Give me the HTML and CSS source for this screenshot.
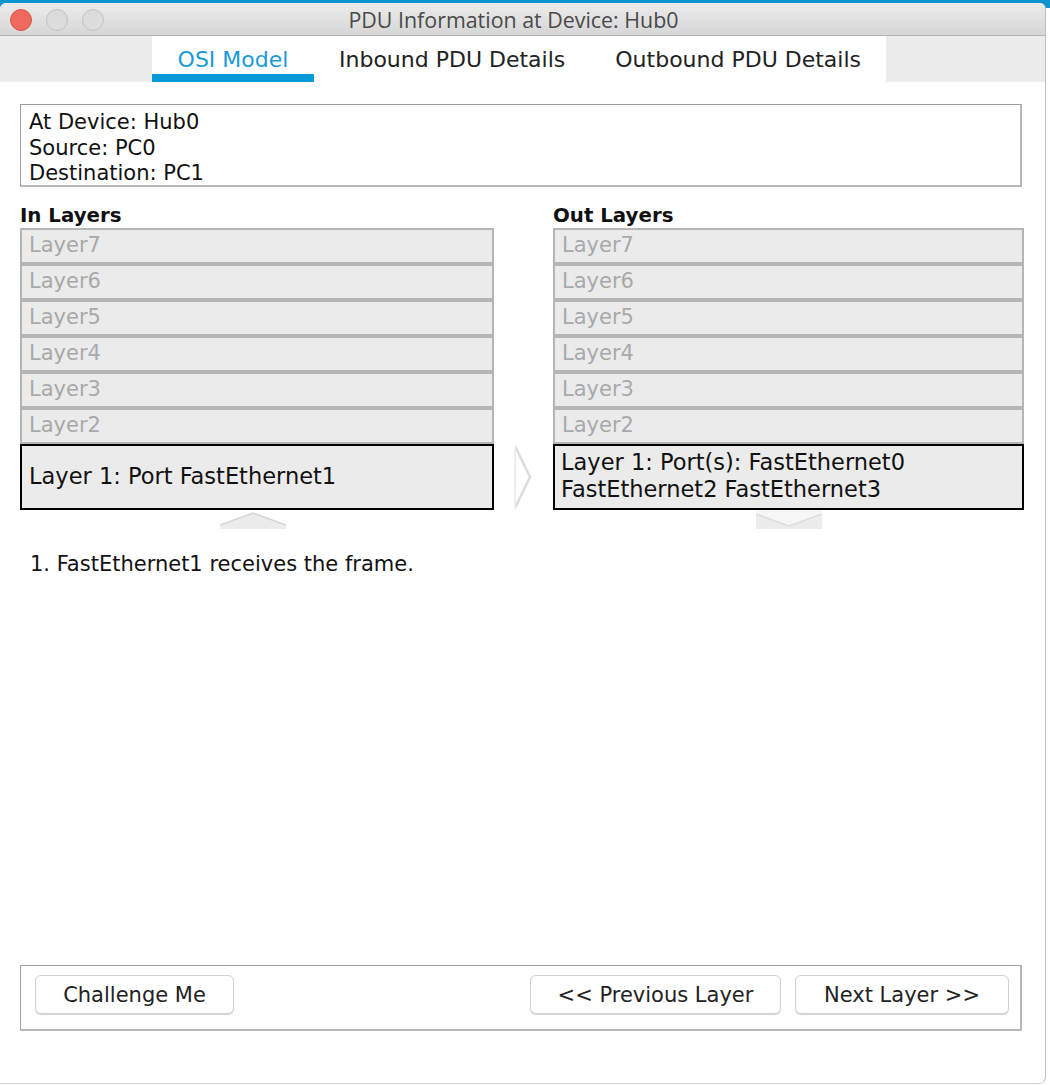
FILE: index.html
```html
<!DOCTYPE html>
<html>
<head>
<meta charset="utf-8">
<link rel="stylesheet" href="styles.css">
</head>
<body>
<div class="desk">
  <div class="window">
    <div class="titlebar">
      <div class="lights">
        <span class="light red"></span>
        <span class="light"></span>
        <span class="light"></span>
      </div>
      <div class="title">PDU Information at Device: Hub0</div>
    </div>
    <div class="tabbar">
      <div class="tab-fill left"></div>
      <div class="tabs">
        <div class="tab active">OSI Model</div>
        <div class="tab">Inbound PDU Details</div>
        <div class="tab">Outbound PDU Details</div>
      </div>
      <div class="tab-fill right"></div>
    </div>
    <div class="content">
      <div class="info">
        <div>At Device: Hub0</div>
        <div>Source: PC0</div>
        <div>Destination: PC1</div>
      </div>
      <div class="layers">
        <div class="col">
          <div class="heading">In Layers</div>
          <div class="row">Layer7</div>
          <div class="row">Layer6</div>
          <div class="row">Layer5</div>
          <div class="row">Layer4</div>
          <div class="row">Layer3</div>
          <div class="row">Layer2</div>
          <div class="row l1 single">Layer 1: Port FastEthernet1</div>
          <div class="nav-arrow">
            <svg width="66" height="19" viewBox="0 0 66 19">
              <rect x="0" y="0" width="66" height="19" fill="#ececec"/>
              <polygon points="0,0 66,0 66,15 33,3 0,15" fill="#ffffff"/>
              <polyline points="0,15 33,3 66,15" fill="none" stroke="#d6d6d6" stroke-width="1.5"/>
            </svg>
          </div>
        </div>
        <div class="mid">
          <svg width="20" height="66" viewBox="0 0 20 66">
            <polyline points="3,2 18,33 3,64" fill="none" stroke="#dcdcdc" stroke-width="2.5"/>
            <line x1="3" y1="2" x2="3" y2="64" stroke="#eeeeee" stroke-width="2"/>
          </svg>
        </div>
        <div class="col">
          <div class="heading">Out Layers</div>
          <div class="row">Layer7</div>
          <div class="row">Layer6</div>
          <div class="row">Layer5</div>
          <div class="row">Layer4</div>
          <div class="row">Layer3</div>
          <div class="row">Layer2</div>
          <div class="row l1">Layer 1: Port(s): FastEthernet0<br>FastEthernet2 FastEthernet3</div>
          <div class="nav-arrow">
            <svg width="66" height="19" viewBox="0 0 66 19">
              <rect x="0" y="0" width="66" height="19" fill="#ececec"/>
              <polygon points="0,0 66,0 66,4 33,16 0,4" fill="#f6f6f6"/>
              <polyline points="0,4 33,16 66,4" fill="none" stroke="#dcdcdc" stroke-width="1.5"/>
            </svg>
          </div>
        </div>
      </div>
      <div class="desc">1. FastEthernet1 receives the frame.</div>
      <div class="bottom">
        <button class="btn challenge">Challenge Me</button>
        <div class="spacer"></div>
        <button class="btn prev">&lt;&lt; Previous Layer</button>
        <button class="btn next">Next Layer &gt;&gt;</button>
      </div>
    </div>
  </div>
</div>
</body>
</html>
```

FILE: styles.css
```css
html, body {
  margin: 0;
  padding: 0;
  background: #ffffff;
}
body {
  font-family: "DejaVu Sans", Verdana, sans-serif;
  color: #111;
}
.desk {
  width: 1050px;
  height: 1086px;
  background: linear-gradient(#0a95cf 0, #0a95cf 8px, #ffffff 8px);
  overflow: hidden;
}
.window {
  margin-top: 3px;
  width: 1045px;
  height: 1080px;
  background: #ffffff;
  border-right: 1px solid #bdbdbd;
  border-bottom: 1px solid #d4d4d4;
  border-radius: 6px 6px 7px 0;
  display: flex;
  flex-direction: column;
  overflow: hidden;
}
.titlebar {
  height: 32px;
  flex: none;
  background: linear-gradient(#ececec, #d6d6d6);
  border-bottom: 1px solid #b4b4b4;
  display: flex;
  align-items: center;
}
.lights {
  display: flex;
  gap: 14px;
  padding-left: 10px;
  padding-top: 2px;
}
.light {
  width: 22px;
  height: 22px;
  border-radius: 50%;
  background: #dcdcdc;
  border: 1px solid #c2c2c2;
  box-sizing: border-box;
}
.light.red {
  background: #ee6a5e;
  border-color: #d65448;
}
.title {
  flex: 1;
  text-align: center;
  font-family: "Open Sans", "Liberation Sans", sans-serif;
  font-size: 21.4px;
  color: #4a4a4a;
  padding-right: 122px;
  padding-top: 1px;
  white-space: nowrap;
}
.tabbar {
  height: 46px;
  flex: none;
  display: flex;
}
.tab-fill {
  background: #ececec;
}
.tab-fill.left { width: 152px; }
.tab-fill.right { flex: 1; }
.tabs {
  display: flex;
  background: #ffffff;
  width: 734px;
}
.tab {
  font-size: 22px;
  color: #222;
  padding: 11px 25px 0 25px;
  box-sizing: border-box;
  height: 46px;
  white-space: nowrap;
}
.tab.active {
  color: #1a9bd7;
  border-bottom: 8px solid #079ad8;
  width: 162px;
  text-align: center;
  padding: 11px 0 0 0;
}
.content {
  flex: 1;
  display: flex;
  flex-direction: column;
  padding: 22px 0 0 20px;
}
.info {
  width: 1002px;
  height: 83px;
  box-sizing: border-box;
  border: 1px solid #9c9c9c;
  border-right: 2px solid #b8b8b8;
  border-bottom: 2px solid #b8b8b8;
  padding: 5px 0 0 8px;
  font-size: 21px;
  line-height: 25.5px;
  color: #111;
}
.layers {
  display: flex;
  margin-top: 17px;
}
.col {
  display: flex;
  flex-direction: column;
}
.col:first-child { width: 474px; }
.col:last-child { width: 471px; }
.heading {
  font-weight: bold;
  font-size: 19.8px;
  line-height: 24px;
  color: #111;
}
.row {
  height: 36px;
  box-sizing: border-box;
  border: 2px solid #b5b5b5;
  background: #ebebeb;
  color: #a9a9a9;
  font-size: 21px;
  line-height: 31px;
  padding-left: 7px;
  white-space: nowrap;
}
.row.l1 {
  height: 66px;
  border: 2px solid #000;
  color: #111;
  font-size: 22.5px;
  line-height: 27px;
  padding-top: 3px;
  padding-left: 7px;
}
.col:last-child .row.l1 { padding-left: 6px; }
.row.l1.single {
  padding-top: 17px;
}
.nav-arrow {
  display: flex;
  justify-content: center;
  height: 19px;
}
.nav-arrow svg { display: block; }
.col:first-child .nav-arrow { padding-right: 8px; }
.mid {
  width: 59px;
  padding-top: 240px;
  padding-left: 18px;
  box-sizing: border-box;
}
.mid svg { display: block; }
.desc {
  margin-top: 23px;
  padding-left: 10px;
  font-size: 21px;
  color: #111;
}
.bottom {
  margin-top: auto;
  margin-bottom: 52px;
  width: 1002px;
  height: 66px;
  box-sizing: border-box;
  border: 1px solid #a2a2a2;
  border-right: 2px solid #b8b8b8;
  border-bottom: 2px solid #b8b8b8;
  display: flex;
  align-items: flex-start;
  padding: 9px 11px 0 14px;
  gap: 14px;
}
.spacer { flex: 1; }
.btn {
  font-family: "DejaVu Sans", Verdana, sans-serif;
  font-size: 21px;
  color: #222;
  background: #ffffff;
  border: 1px solid #d2d2d2;
  border-radius: 6px;
  box-shadow: 0 1px 1px rgba(0,0,0,0.18);
  height: 39px;
  padding: 0;
}
.btn.challenge { width: 199px; }
.btn.prev { width: 251px; }
.btn.next { width: 214px; }
```
